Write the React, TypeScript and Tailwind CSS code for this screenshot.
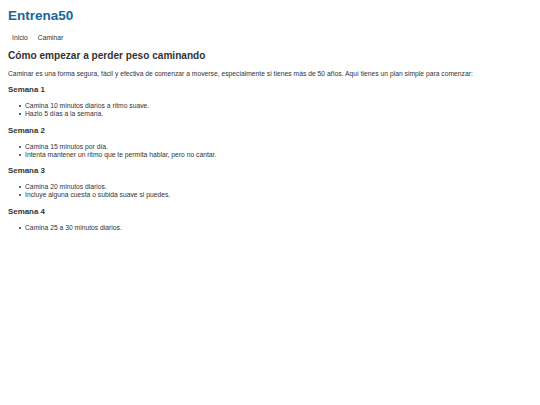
const weeks = [
  {
    title: 'Semana 1',
    items: ['Camina 10 minutos diarios a ritmo suave.', 'Hazlo 5 días a la semana.'],
  },
  {
    title: 'Semana 2',
    items: ['Camina 15 minutos por día.', 'Intenta mantener un ritmo que te permita hablar, pero no cantar.'],
  },
  {
    title: 'Semana 3',
    items: ['Camina 20 minutos diarios.', 'Incluye alguna cuesta o subida suave si puedes.'],
  },
  {
    title: 'Semana 4',
    items: ['Camina 25 a 30 minutos diarios.'],
  },
];

export default function App() {
  return (
    <div className="min-h-[405px] bg-white px-[8px] pt-[8px] text-[#333] font-['Liberation_Sans',Arial,sans-serif]">
      <header>
        <h1 className="text-[13.5px] leading-[16px] font-bold text-[#17679a]">Entrena50</h1>
        <nav className="mt-[10px] flex gap-[10px] pl-[4px] text-[6.75px] leading-[8px]">
          <a>Inicio</a>
          <a>Caminar</a>
        </nav>
      </header>

      <main>
        <h2 className="mt-[8px] text-[10.1px] leading-[12px] font-bold">Cómo empezar a perder peso caminando</h2>
        <p className="mt-[8px] text-[6.75px] leading-[8px]">
          Caminar es una forma segura, fácil y efectiva de comenzar a moverse, especialmente si tienes más de 50 años. Aquí tienes un plan simple para comenzar:
        </p>

        {weeks.map((week, idx) => (
          <section key={idx} className={idx === 0 ? 'mt-[7px]' : 'mt-[7.6px]'}>
            <h3 className="text-[7.9px] leading-[10px] font-bold">{week.title}</h3>
            <ul className="mt-[7px] pl-[11px] text-[6.75px] leading-[8px]">
              {week.items.map((item, i) => (
                <li key={i} className="flex items-center">
                  <span className="mr-[4px] h-[2px] w-[2px] shrink-0 rounded-full bg-[#333]" />
                  <span>{item}</span>
                </li>
              ))}
            </ul>
          </section>
        ))}
      </main>
    </div>
  );
}
